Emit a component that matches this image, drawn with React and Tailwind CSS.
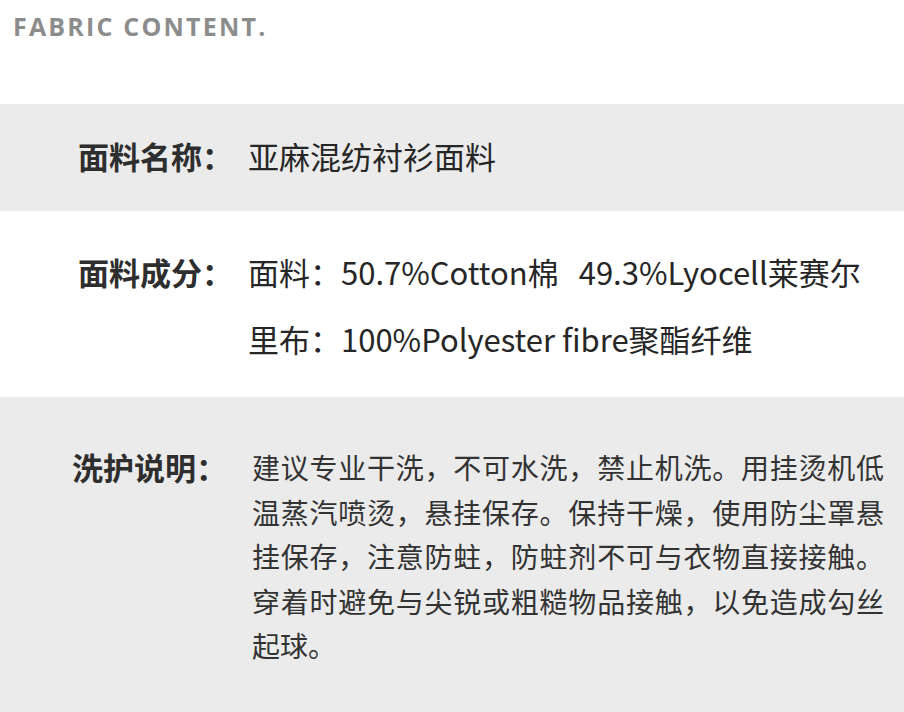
import React from 'react';

const cjk = "font-['Noto_Sans_CJK_SC','Noto_Sans',sans-serif]";

const careLines = [
  '建议专业干洗，不可水洗，禁止机洗。用挂烫机低',
  '温蒸汽喷烫，悬挂保存。保持干燥，使用防尘罩悬',
  '挂保存，注意防蛀，防蛀剂不可与衣物直接接触。',
  '穿着时避免与尖锐或粗糙物品接触，以免造成勾丝',
];

export default function App() {
  return (
    <div className={`w-[904px] h-[712px] overflow-hidden bg-white ${cjk}`}>
      <div className="h-[104px] pl-[13px] pt-[11px]">
        <h2 className="font-['Open_Sans',sans-serif] font-bold text-[25px] leading-[30px] tracking-[2.2px] text-[#8c8c8c]">
          FABRIC CONTENT.
        </h2>
      </div>

      <div className="h-[107px] bg-[#ebebeb] pt-[32px] pl-[78px] flex text-[31px] leading-[40px]">
        <span className="w-[170px] shrink-0 font-bold text-[#2e2e2e]">面料名称：</span>
        <span className="text-[#262626]">亚麻混纺衬衫面料</span>
      </div>

      <div className="h-[186px] pt-[27px] pl-[78px] flex text-[31px] leading-[67px]">
        <span className="w-[170px] shrink-0 font-bold text-[#2e2e2e]">面料成分：</span>
        <div className="flex flex-col text-[#262626] whitespace-nowrap">
          <span>
            面料：50.7%Cotton棉<span className="ml-[20px]">49.3%Lyocell莱赛尔</span>
          </span>
          <span>里布：100%Polyester fibre聚酯纤维</span>
        </div>
      </div>

      <div className="h-[315px] bg-[#ebebeb] pt-[48px] pl-[72px] flex leading-[44.5px]">
        <span className="w-[180px] shrink-0 font-bold text-[31px] text-[#2e2e2e]">洗护说明：</span>
        <div className="w-[632px] flex flex-col text-[28px] text-[#333333] whitespace-nowrap">
          {careLines.map((line) => (
            <span key={line} className="block text-justify [text-align-last:justify]">
              {line}
            </span>
          ))}
          <span>起球。</span>
        </div>
      </div>
    </div>
  );
}
